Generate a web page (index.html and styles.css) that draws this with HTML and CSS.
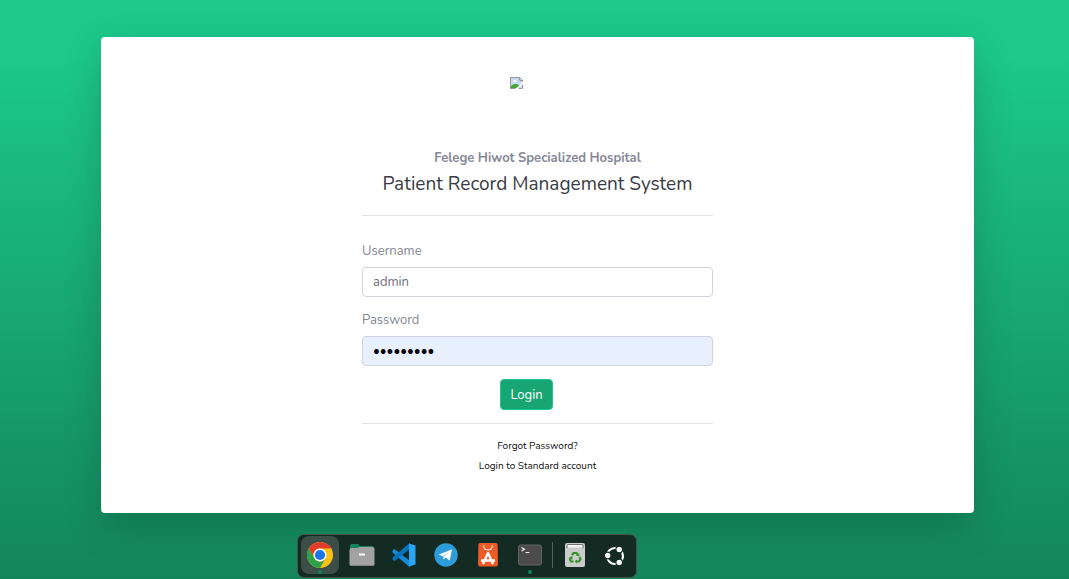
FILE: index.html
```html
<!DOCTYPE html>
<html lang="en">
<head>
<meta charset="utf-8">
<meta name="viewport" content="width=device-width, initial-scale=1">
<title>Patient Record Management System</title>
<link rel="stylesheet" href="styles.css">
</head>
<body>
<main class="page">
  <section class="card">
    <div class="panel">
      <div class="logo">
        <svg class="logo-icon" viewBox="0 0 13 12" aria-hidden="true">
          <path d="M.5.5h9l3 3v8H.5z" fill="#fff" stroke="#999"/>
          <path d="M1 1h8v3h3v7H1z" fill="#c4d8fa"/>
          <path d="M3 5V4h1V3h2v1h1v1z" fill="#fff"/>
          <path d="M1 11V9l3-2h3l3 2v2z" fill="#45a536"/>
          <path d="M13 5v2L8 12H5l5-4 2-3z" fill="#fff"/>
          <path d="M9.500.5v3h3z" fill="#eee" stroke="#999"/>
        </svg>
      </div>
      <h2 class="hospital">Felege Hiwot Specialized Hospital</h2>
      <h1 class="title">Patient Record Management System</h1>
      <hr class="rule">
      <form class="form">
        <div class="field">
          <label class="label" for="username">Username</label>
          <input class="input" id="username" type="text" value="admin">
        </div>
        <div class="field">
          <label class="label" for="password">Password</label>
          <input class="input input-filled" id="password" type="password" value="123456789">
        </div>
        <div class="actions"><button class="login" type="submit">Login</button></div>
      </form>
      <hr class="rule">
      <nav class="links">
        <a class="link" href="#">Forgot Password?</a>
        <a class="link" href="#">Login to Standard account</a>
      </nav>
    </div>
  </section>
</main>
<div class="dock">
  <span class="app app-active">
    <svg class="icon" viewBox="0 0 26 26">
      <circle cx="13" cy="13" r="13" fill="#fbc116"/>
      <path d="M1.740 6.500A13 13 0 0 1 24.260 6.500H13A6.500 6.500 0 0 0 7.370 16.250z" fill="#e33b2e"/>
      <path d="M1.740 6.500A13 13 0 0 0 13 26l5.630-9.750A6.500 6.500 0 0 1 7.370 16.250z" fill="#2da04b"/>
      <circle cx="13" cy="13" r="6.500" fill="#fff"/><circle cx="13" cy="13" r="5.100" fill="#1a73e8"/>
    </svg><i class="running"></i>
  </span>
  <span class="app">
    <svg class="icon" viewBox="0 0 26 26">
      <path d="M1 4q0-2 2-2h6l2 2h12q2 0 2 2v8H1z" fill="#15825d"/>
      <path d="M.5 8q0-2 2-2h6l2-1h13q2 0 2 2v15q0 2-2 2h-21q-2 0-2-2z" fill="#a2a2a2"/>
      <path d="M.5 21v1q0 2 2 2h21q2 0 2-2v-1q0 2-2 2h-21q-2 0-2-2" fill="#858585"/>
      <path d="M10 11.500h6v2h-6z" fill="#fff"/>
    </svg>
  </span>
  <span class="app">
    <svg class="icon" viewBox="0 0 26 26">
      <path d="M1.500 8.500 3.500 7 19 19v6.500L1.500 10.500z" fill="#1689d2"/>
      <path d="M1.500 17.500 3.500 19 19 7V.8L1.500 15.500z" fill="#0873b9"/>
      <path d="m18 1.500 6.500 2v19L18 24.500z" fill="#2aa5f5"/>
    </svg>
  </span>
  <span class="app">
    <svg class="icon" viewBox="0 0 26 26">
      <circle cx="13" cy="13" r="11.700" fill="#2c9dd8"/>
      <path d="m5.500 12.800 13.500-5.600-2.300 11.400-4-3-2 2-1-3.600z" fill="#fff"/>
      <path d="m9.700 14 6.800-4.700-5.200 5.600-.6 2.700z" fill="#b8dced"/>
    </svg>
  </span>
  <span class="app">
    <svg class="icon" viewBox="0 0 26 26">
      <path d="M5 1h16q1.500 0 1.600 2L23 22q0 2.500-2 2.500H5q-2 0-2-2.500L3.400 3Q3.500 1 5 1z" fill="#ed5b26"/>
      <path d="M8.500 3q0 5 4.500 5t4.500-5" fill="none" stroke="#ffd8c7" stroke-width="1.200"/>
      <path d="m8 22 5-11 5 11M6 18.500h14" fill="none" stroke="#fff" stroke-width="2.300" stroke-linejoin="round"/>
    </svg>
  </span>
  <span class="app">
    <svg class="icon" viewBox="0 0 26 26">
      <rect x="1.500" y="3" width="23" height="20" rx="2" fill="#4b4b4b" stroke="#626262"/>
      <path d="m4.500 5.500 3 1.800-3 1.800M8.500 10.500h4" fill="none" stroke="#eee" stroke-width="1.200"/>
    </svg><i class="running"></i>
  </span>
  <span class="divider"></span>
  <span class="app app-small">
    <svg class="icon" viewBox="0 0 26 26">
      <rect x="3" y="1" width="20" height="24" rx="2" fill="#c9cccb"/>
      <rect x="5" y="2.500" width="16" height="3" rx="1" fill="#f5f5f5"/>
      <path d="M5 6V3.500q0-1 1-1h14q1 0 1 1V6" fill="none" stroke="#555" stroke-width=".8"/>
      <g fill="none" stroke="#39912e" stroke-width="2.200"><path d="m10 13 1.500-2h3l1.500 2M17.500 15l1 2-1.500 2.500h-2.500M11.500 19.500H9L8 17.500l1-2"/></g>
      <path d="m14 13.500 3.500-2v3zM15 17.500v4l-2.500-2zM7 15.500l3.500-1.500v3.500z" fill="#39912e"/>
    </svg>
  </span>
  <span class="app app-small">
    <svg class="icon" viewBox="0 0 26 26">
      <circle cx="13" cy="14" r="8" fill="none" stroke="#fff" stroke-width="2.200"/>
      <g fill="#fff" stroke="#142b24" stroke-width="1.200"><circle cx="5.700" cy="13.500" r="3.300"/><circle cx="17.200" cy="7.500" r="3.300"/><circle cx="17.200" cy="20.500" r="3.300"/></g>
    </svg>
  </span>
</div>
</body>
</html>
```
FILE: styles.css
```css
* { box-sizing: border-box; }
body {
  margin: 0;
  min-height: 100vh;
  font-family: Nunito, Lato, "Open Sans", sans-serif;
  font-size: 13px;
  line-height: 20px;
  color: #858796;
  background: linear-gradient(180deg, #1cc88a 10%, #13855c 100%) no-repeat;
}
.page { padding: 37px 95px 66px 101px; }
.card {
  padding: 40px 24px 37px;
  background: #fff;
  border-radius: 4px;
  box-shadow: 0 13px 38px rgba(0, 0, 0, .175);
}
.panel { max-width: 351px; margin: 0 auto; }
.logo { width: 56px; height: 56px; margin: 0 auto 15px; }
.logo-icon { display: block; width: 13px; height: 12px; }
.hospital { margin: 0 0 4px; font-size: 13px; font-weight: 700; text-align: center; }
.title { margin: 0 0 19px; font-size: 19px; line-height: 24px; font-weight: 400; color: #3a3b45; text-align: center; }
.rule { margin: 0; border: 0; border-top: 1px solid #e3e3e5; }
.form { display: flex; flex-direction: column; gap: 13px; padding: 25px 0 13px; }
.field { display: flex; flex-direction: column; gap: 6px; }
.label { font-size: 13px; }
.input {
  width: 100%;
  height: 30px;
  padding: 0 10px;
  font: inherit;
  color: #6e707e;
  background: #fff;
  border: 1px solid #d1d3e2;
  border-radius: 4px;
}
.input-filled { color: #000; background: #e8f0fe; }
.actions { display: flex; justify-content: center; padding-right: 22px; }
.login {
  height: 31px;
  padding: 0 9px;
  font: inherit;
  color: #fff;
  background: #17a673;
  border: 1px solid #1cc88a;
  border-radius: 4px;
}
.links { display: flex; flex-direction: column; align-items: center; padding-top: 12px; font-size: 10px; }
.link { color: #111; text-decoration: none; }
.dock {
  position: fixed;
  left: 297px;
  bottom: 1px;
  display: flex;
  align-items: center;
  gap: 4px;
  height: 44px;
  padding: 0 3px 2px;
  background: #142b24;
  border: 1px solid #46534e;
  border-radius: 7px;
}
.app { position: relative; display: grid; place-items: center; width: 38px; height: 38px; border-radius: 8px; }
.app-active { background: #3b4e48; }
.app-small { width: 36px; }
.icon { display: block; width: 26px; height: 26px; }
.running { position: absolute; bottom: 0; width: 4px; height: 4px; border-radius: 50%; background: #13855c; }
.divider { width: 1px; height: 26px; margin-left: -1px; background: #52625c; }
```
